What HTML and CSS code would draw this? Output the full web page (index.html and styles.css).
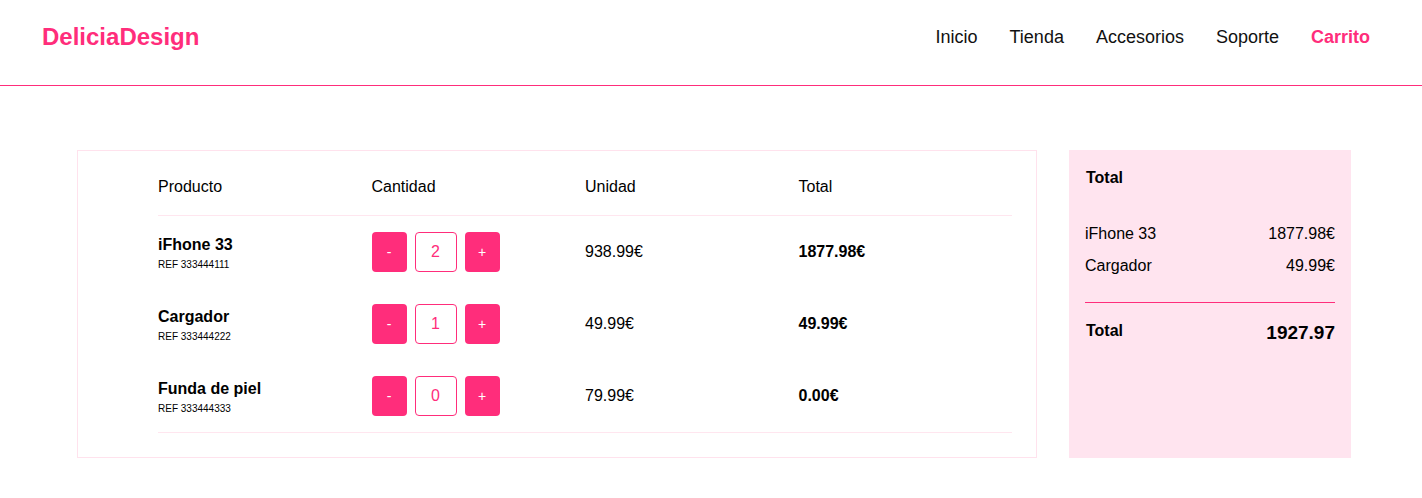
FILE: index.html
```html
<!DOCTYPE html>
<html lang="es">
<head>
<meta charset="utf-8">
<title>DeliciaDesign - Carrito</title>
<link rel="stylesheet" href="styles.css">
</head>
<body>
<header class="site-header">
  <div class="logo">DeliciaDesign</div>
  <nav class="nav">
    <a href="#">Inicio</a>
    <a href="#">Tienda</a>
    <a href="#">Accesorios</a>
    <a href="#">Soporte</a>
    <a href="#" class="active">Carrito</a>
  </nav>
</header>
<main class="main">
  <section class="cart-card">
    <table class="cart-table">
      <thead>
        <tr><th>Producto</th><th>Cantidad</th><th>Unidad</th><th>Total</th></tr>
      </thead>
      <tbody>
        <tr>
          <td><div class="p-name">iFhone 33</div><div class="p-ref">REF 333444111</div></td>
          <td><div class="qty"><button class="qbtn">-</button><div class="qval">2</div><button class="qbtn">+</button></div></td>
          <td>938.99€</td>
          <td class="strong">1877.98€</td>
        </tr>
        <tr>
          <td><div class="p-name">Cargador</div><div class="p-ref">REF 333444222</div></td>
          <td><div class="qty"><button class="qbtn">-</button><div class="qval">1</div><button class="qbtn">+</button></div></td>
          <td>49.99€</td>
          <td class="strong">49.99€</td>
        </tr>
        <tr>
          <td><div class="p-name">Funda de piel</div><div class="p-ref">REF 333444333</div></td>
          <td><div class="qty"><button class="qbtn">-</button><div class="qval">0</div><button class="qbtn">+</button></div></td>
          <td>79.99€</td>
          <td class="strong">0.00€</td>
        </tr>
      </tbody>
    </table>
  </section>
  <aside class="summary">
    <div class="sum-title">Total</div>
    <div class="sum-row"><span>iFhone 33</span><span>1877.98€</span></div>
    <div class="sum-row"><span>Cargador</span><span>49.99€</span></div>
    <div class="sum-divider"></div>
    <div class="sum-total"><span class="sum-total-label">Total</span><span class="sum-total-value">1927.97</span></div>
  </aside>
</main>
</body>
</html>
```

FILE: styles.css
```css
* { box-sizing: border-box; }
html, body { margin: 0; padding: 0; background: #fff; }
body {
  font-family: "Liberation Sans", Arial, sans-serif;
  color: #000;
  font-size: 16px;
}
.site-header {
  display: flex;
  align-items: center;
  justify-content: space-between;
  height: 86px;
  padding: 0 52px 11px 42px;
  border-bottom: 1px solid #ff2d7b;
}
.logo {
  color: #ff2d7b;
  font-weight: bold;
  font-size: 24px;
  line-height: 28px;
}
.nav {
  display: flex;
  gap: 32px;
}
.nav a {
  color: #111;
  text-decoration: none;
  font-size: 18px;
  line-height: 22px;
}
.nav a.active {
  color: #ff2d7b;
  font-weight: bold;
}
.main {
  display: flex;
  align-items: stretch;
  gap: 32px;
  padding: 64px 71px 0 77px;
}
.cart-card {
  width: 960px;
  flex: none;
  border: 1px solid #ffe2ed;
  padding: 26px 24px 24px 80px;
}
.cart-table {
  width: 100%;
  border-collapse: collapse;
  table-layout: fixed;
}
.cart-table th {
  text-align: left;
  font-weight: normal;
  line-height: 20px;
  padding: 0 0 18px 0;
  border-bottom: 1px solid #ffe6ef;
}
.cart-table td {
  padding: 16px 0;
  vertical-align: middle;
  line-height: 20px;
}
.cart-table tbody tr:last-child td {
  border-bottom: 1px solid #ffe6ef;
}
.cart-table td.strong { font-weight: bold; }
.p-name {
  font-weight: bold;
  font-size: 16px;
  line-height: 18px;
  padding-top: 3px;
}
.p-ref {
  font-size: 10px;
  line-height: 14px;
  margin-top: 4px;
}
.qty {
  display: flex;
  gap: 8px;
}
.qbtn {
  width: 35px;
  height: 40px;
  border: none;
  border-radius: 4px;
  background: #ff2d7b;
  color: #fff;
  font-family: "Liberation Sans", Arial, sans-serif;
  font-size: 14px;
  padding: 0;
}
.qval {
  width: 42px;
  height: 40px;
  border: 1px solid #ff2d7b;
  border-radius: 4px;
  color: #ff2d7b;
  display: flex;
  align-items: center;
  justify-content: center;
  font-size: 16px;
}
.summary {
  flex: 1;
  background: #ffe4ef;
  padding: 17px 16px 16px 16px;
}
.sum-title {
  font-weight: bold;
  line-height: 22px;
  margin-bottom: 29px;
  padding-left: 1px;
}
.sum-row {
  display: flex;
  justify-content: space-between;
  line-height: 32px;
}
.sum-divider {
  height: 1px;
  background: #ff2d7b;
  margin-top: 20px;
}
.sum-total {
  display: flex;
  justify-content: space-between;
  align-items: center;
  margin-top: 14px;
  height: 32px;
}
.sum-total-label {
  font-weight: bold;
  position: relative;
  top: -2px;
  padding-left: 1px;
}
.sum-total-value {
  font-weight: bold;
  font-size: 19px;
}
```
